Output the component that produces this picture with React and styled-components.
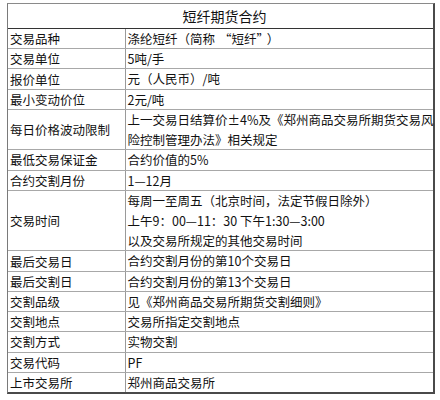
import React from "react";
import styled, { createGlobalStyle } from "styled-components";

const Global = createGlobalStyle`
  html, body { margin: 0; padding: 0; background: #fff; }
  body { font-family: "Noto Sans CJK SC", "Noto Sans", sans-serif; color: #111; }
`;

const LINE = 20.22;

const Table = styled.div`
  margin: 3px 0 0 7px;
  width: 428px;
  box-sizing: border-box;
  border-top: 1px solid #8a8a8a;
  border-left: 1px solid #7a7a7a;
  border-right: 2px solid #4a4a4a;
  border-bottom: 2px solid #4a4a4a;
  display: flex;
  flex-direction: column;
`;

const Header = styled.div`
  height: 24px;
  border-bottom: 1px solid #333;
  display: flex;
  align-items: center;
  justify-content: center;
  padding-left: 8px;
  font-size: 14px;
  line-height: 24px;
`;

const Row = styled.div`
  display: grid;
  grid-template-columns: 118px 1fr;
  height: ${(p) => p.$lines * LINE - 1}px;
  border-bottom: 1px solid #a8a8a8;
  &:last-child { border-bottom: none; }
`;

const Label = styled.div`
  border-right: 1px solid #9a9a9a;
  display: flex;
  align-items: center;
  padding-left: 2px;
  font-size: 12.5px;
  white-space: nowrap;
`;

const Value = styled.div`
  display: flex;
  flex-direction: column;
  justify-content: center;
  padding-left: 1.5px;
  font-size: 12.5px;
  white-space: nowrap;
`;

const Line = styled.div`
  line-height: ${(p) => (p.$lines * LINE - 1) / p.$lines}px;
`;

const Quote = styled.span`
  padding: ${(p) => (p.$open ? "0 0 0 4px" : "0 4px 0 0")};
`;

const rows = [
  ["交易品种", [<>涤纶短纤（简称<Quote $open>“</Quote>短纤<Quote>”</Quote>）</>]],
  ["交易单位", ["5吨/手"]],
  ["报价单位", ["元（人民币）/吨"]],
  ["最小变动价位", ["2元/吨"]],
  ["每日价格波动限制", ["上一交易日结算价±4%及《郑州商品交易所期货交易风", "险控制管理办法》相关规定"]],
  ["最低交易保证金", ["合约价值的5%"]],
  ["合约交割月份", ["1—12月"]],
  ["交易时间", ["每周一至周五（北京时间，法定节假日除外）", "上午9：00—11：30 下午1:30—3:00", "以及交易所规定的其他交易时间"]],
  ["最后交易日", ["合约交割月份的第10个交易日"]],
  ["最后交割日", ["合约交割月份的第13个交易日"]],
  ["交割品级", ["见《郑州商品交易所期货交割细则》"]],
  ["交割地点", ["交易所指定交割地点"]],
  ["交割方式", ["实物交割"]],
  ["交易代码", ["PF"]],
  ["上市交易所", ["郑州商品交易所"]],
];

export default function App() {
  return (
    <>
      <Global />
      <Table>
        <Header>短纤期货合约</Header>
        {rows.map(([label, lines]) => (
          <Row key={label} $lines={lines.length}>
            <Label>{label}</Label>
            <Value>
              {lines.map((t, i) => (
                <Line key={i} $lines={lines.length}>{t}</Line>
              ))}
            </Value>
          </Row>
        ))}
      </Table>
    </>
  );
}
